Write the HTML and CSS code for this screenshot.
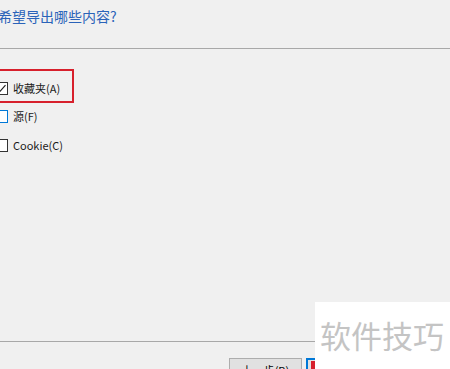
FILE: index.html
```html
<!DOCTYPE html>
<html lang="zh-CN">
<head>
    <meta charset="UTF-8">
    <meta name="viewport" content="width=device-width, initial-scale=1.0">
    <title>导出</title>
    <link rel="stylesheet" href="styles.css">
</head>
<body>
    <div class="dialog">
        <div class="kopf">
            <h1 class="titel">希望导出哪些内容?</h1>
        </div>
        <div class="optionen">
            <div class="rahmen">
                <label class="zeile">
                    <span class="box">
                        <svg width="11" height="11" viewBox="0 0 11 11"><path d="M1.5 5.5 L4.2 8.2 L9.5 2.2" fill="none" stroke="#222" stroke-width="1.2"/></svg>
                    </span>
                    收藏夹(A)
                </label>
            </div>
            <label class="zeile zeile2">
                <span class="box aktiv"></span>
                源(F)
            </label>
            <label class="zeile zeile3">
                <span class="box"></span>
                Cookie(C)
            </label>
        </div>
        <div class="unten">
            <button class="knopf">上一步(B)</button>
            <button class="knopf weiter"><span class="markierung"></span></button>
        </div>
    </div>
    <div class="wasserzeichen">软件技巧</div>
</body>
</html>
```

FILE: styles.css
```css
body {
    font-family: "Noto Sans CJK SC", "Noto Sans", sans-serif;
    margin: 0;
    padding: 0;
    width: 450px;
    height: 369px;
    overflow: hidden;
    background-color: #f0f0f0;
    color: #1a1a1a;
}
.dialog {
    height: 369px;
    overflow: hidden;
}
.kopf {
    height: 49px;
    box-sizing: border-box;
    padding-top: 6px;
    border-bottom: 1px solid #a8a8a8;
}
.titel {
    margin: 0 0 0 -2px;
    font-size: 14px;
    font-weight: normal;
    line-height: 20px;
    color: #2a63b9;
    white-space: nowrap;
}
.optionen {
    height: 292px;
    box-sizing: border-box;
    padding-top: 20px;
}
.rahmen {
    margin-left: -15px;
    width: 89px;
    height: 34px;
    box-sizing: border-box;
    border: 2px solid #d7202c;
    padding: 9px 0 0 8px;
}
.zeile {
    display: flex;
    align-items: center;
    gap: 5px;
    height: 16px;
    font-size: 11px;
    line-height: 16px;
    white-space: nowrap;
}
.zeile2 {
    margin: 5px 0 0 -5px;
}
.zeile3 {
    margin: 13px 0 0 -5px;
}
.box {
    display: flex;
    align-items: center;
    justify-content: center;
    width: 13px;
    height: 13px;
    box-sizing: border-box;
    border: 1px solid #333;
    background-color: #fff;
    flex-shrink: 0;
}
.box.aktiv {
    border-color: #0078d7;
}
.unten {
    border-top: 1px solid #a8a8a8;
    padding: 16px 0 0 229px;
    display: flex;
    gap: 4px;
}
.knopf {
    width: 73px;
    height: 23px;
    border: 1px solid #adadad;
    background-color: #e1e1e1;
    font-family: "Noto Sans CJK SC", sans-serif;
    font-size: 11px;
    color: #000;
    padding: 0;
    white-space: nowrap;
}
.weiter {
    border: 2px solid #0078d7;
    position: relative;
}
.markierung {
    position: absolute;
    left: 3px;
    top: 1px;
    width: 4px;
    height: 30px;
    background-color: #d7202c;
}
.wasserzeichen {
    position: absolute;
    right: 0;
    bottom: 0;
    width: 135px;
    height: 67px;
    box-sizing: border-box;
    background-color: #fff;
    padding: 13px 0 0 5px;
    font-size: 31px;
    line-height: 40px;
    color: #c4c4c4;
    white-space: nowrap;
}
```
